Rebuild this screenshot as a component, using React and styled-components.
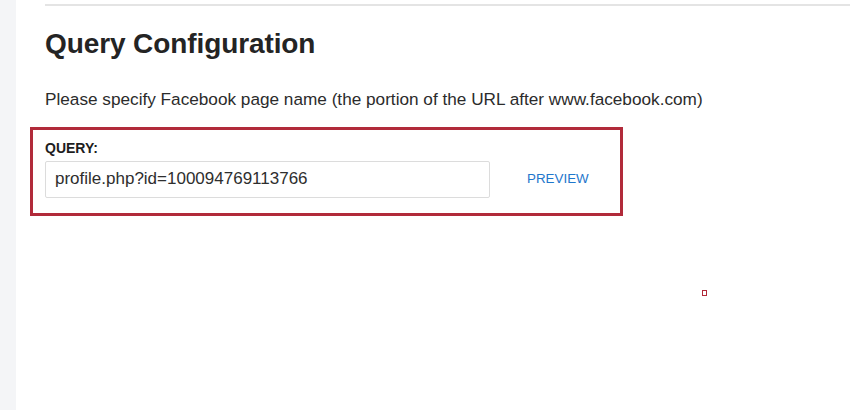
import React from "react";
import styled, { createGlobalStyle } from "styled-components";

const Global = createGlobalStyle`
  html, body { margin: 0; padding: 0; background: #ffffff; }
  body { font-family: "Liberation Sans", Arial, Helvetica, sans-serif; }
  * { box-sizing: border-box; }
`;

const Page = styled.div`
  display: flex;
  width: 850px;
  height: 410px;
  overflow: hidden;
  background: #ffffff;
  position: relative;
`;

const Sidebar = styled.div`
  flex: 0 0 16px;
  background: #f4f5f7;
`;

const Main = styled.main`
  flex: 1;
  padding-left: 29px;
  padding-top: 4px;
`;

const Rule = styled.div`
  height: 2px;
  background: #e4e4e4;
`;

const Title = styled.h2`
  margin: 20.5px 0 0;
  font-size: 28px;
  line-height: 33.6px;
  font-weight: 700;
  color: #242424;
  letter-spacing: -0.1px;
`;

const Description = styled.p`
  margin: 28.7px 0 0;
  font-size: 17.2px;
  line-height: 20px;
  color: #2b2b2b;
`;

const Highlight = styled.section`
  margin: 18px 0 0 -15px;
  width: 593px;
  border: 3px solid #b12a3a;
  padding: 11px 12px 15px 12px;
`;

const Label = styled.label`
  display: block;
  font-size: 14px;
  line-height: 15px;
  font-weight: 700;
  color: #1e1e1e;
`;

const Row = styled.div`
  display: flex;
  align-items: center;
  gap: 37px;
  margin-top: 5px;
`;

const Input = styled.input`
  width: 445px;
  height: 37px;
  border: 1px solid #dcdcdc;
  border-radius: 2px;
  padding: 0 9px;
  font-family: "Liberation Sans", Arial, Helvetica, sans-serif;
  font-size: 17px;
  color: #2e2e2e;
  background: #ffffff;
  outline: none;
`;

const LinkButton = styled.button`
  border: none;
  background: none;
  padding: 0;
  font-family: "Liberation Sans", Arial, Helvetica, sans-serif;
  font-size: 13.4px;
  color: #1f77cc;
  cursor: pointer;
  margin-top: -2px;
`;

const Marker = styled.div`
  position: absolute;
  left: 702px;
  top: 290px;
  width: 5px;
  height: 6px;
  border: 1.5px solid #b12a3a;
  background: #ffffff;
`;

export default function App() {
  return (
    <>
      <Global />
      <Page>
        <Sidebar />
        <Main>
          <Rule />
          <Title>Query Configuration</Title>
          <Description>
            Please specify Facebook page name (the portion of the URL after www.facebook.com)
          </Description>
          <Highlight>
            <Label htmlFor="query">QUERY:</Label>
            <Row>
              <Input id="query" defaultValue="profile.php?id=100094769113766" />
              <LinkButton type="button">PREVIEW</LinkButton>
            </Row>
          </Highlight>
        </Main>
        <Marker />
      </Page>
    </>
  );
}
